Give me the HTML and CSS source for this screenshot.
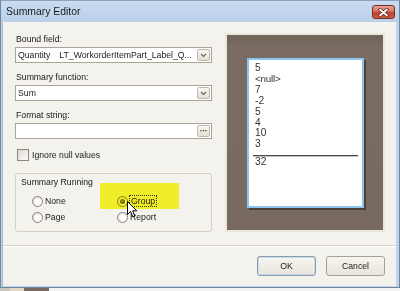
FILE: index.html
```html
<!DOCTYPE html>
<html>
<head>
<meta charset="utf-8">
<link rel="stylesheet" href="styles.css">
</head>
<body>
<div class="window">
  <div class="titlebar">
    <span class="title">Summary Editor</span>
    <div class="close">
      <svg width="11" height="9" viewBox="0 0 11 9"><path d="M2 1.5 L9 7.5 M9 1.5 L2 7.5" stroke="#5a1d15" stroke-width="3.2" stroke-linecap="round"/><path d="M2 1.5 L9 7.5 M9 1.5 L2 7.5" stroke="#fff" stroke-width="1.8" stroke-linecap="round"/></svg>
    </div>
  </div>
  <div class="client">
    <div class="main">
      <div class="left">
        <div class="field">
          <div class="lbl">Bound field:</div>
          <div class="combo"><span class="val">Quantity<span class="gap"></span>LT_WorkorderItemPart_Label_Q...</span><span class="ddbtn"><svg width="7" height="5" viewBox="0 0 7 5"><path d="M1 1 L3.5 3.5 L6 1" fill="none" stroke="#6b6358" stroke-width="1.1"/></svg></span></div>
        </div>
        <div class="field">
          <div class="lbl">Summary function:</div>
          <div class="combo"><span class="val">Sum</span><span class="ddbtn"><svg width="7" height="5" viewBox="0 0 7 5"><path d="M1 1 L3.5 3.5 L6 1" fill="none" stroke="#6b6358" stroke-width="1.1"/></svg></span></div>
        </div>
        <div class="field">
          <div class="lbl">Format string:</div>
          <div class="combo"><span class="val"></span><span class="ddbtn dots">···</span></div>
        </div>
        <div class="check"><span class="box"></span><span>Ignore null values</span></div>
        <div class="group">
          <div class="ghead">Summary Running</div>
          <div class="radios">
            <div class="radio"><span class="circle"></span><span>None</span></div>
            <div class="radio"><span class="circle on"></span><span class="focus">Group</span></div>
            <div class="radio"><span class="circle"></span><span>Page</span></div>
            <div class="radio"><span class="circle"></span><span>Report</span></div>
          </div>
        </div>
      </div>
      <div class="preview">
        <div class="page">
          <div>5</div>
          <div class="null">&lt;null&gt;</div>
          <div>7</div>
          <div>-2</div>
          <div>5</div>
          <div>4</div>
          <div>10</div>
          <div>3</div>
          <div class="rule"></div>
          <div>32</div>
        </div>
      </div>
    </div>
    <div class="sep"></div>
    <div class="buttons">
      <div class="btn default">OK</div>
      <div class="btn">Cancel</div>
    </div>
  </div>
</div>
<div class="below"><span class="b1"></span><span class="b2"></span><span class="b3"></span></div>
<div class="highlight"></div>
<svg class="cursor" width="11" height="17" viewBox="0 0 11 17"><path d="M0.5 0.5 L0.5 13.5 L3.5 10.5 L5.8 15.8 L7.8 15 L5.6 9.8 L9.8 9.8 Z" fill="#fff" stroke="#000" stroke-width="1" stroke-linejoin="round"/></svg>
</body>
</html>
```
FILE: styles.css
```css
* { box-sizing: border-box; margin: 0; padding: 0; }
html, body { width: 400px; height: 291px; overflow: hidden; }
body {
  font-family: "Liberation Sans", Arial, sans-serif;
  font-size: 8.7px;
  color: #1a1a1a;
  background: #ecebe8;
  position: relative;
}
.window {
  width: 400px;
  height: 288px;
  display: flex;
  flex-direction: column;
  background: #bfd4ec;
  border: 1px solid #6f86a0;
  border-top-color: #8aa2bd;
  padding: 0 3px 1px 2px;
}
.titlebar {
  height: 21px;
  display: flex;
  align-items: flex-start;
  background: linear-gradient(#c9dcf0, #bad0e9);
  margin: 0 -3px 0 -2px;
  padding: 0 4px 0 5px;
}
.title {
  font-size: 10.4px;
  color: #1c1c1c;
  line-height: 21px;
}
.close {
  margin-left: auto;
  margin-top: 4px;
  width: 23px;
  height: 14px;
  border: 1px solid #7b2c22;
  border-radius: 3px;
  background: linear-gradient(#e6a399 0%, #d5705f 45%, #bd4530 55%, #c85a45 100%);
  display: flex;
  align-items: center;
  justify-content: center;
}
.client {
  flex: 1;
  background: #f4f2ed;
  display: flex;
  flex-direction: column;
  padding: 11px 11px 0 12px;
  border-left: 1px solid #aab9ca;
  margin-left: -1px;
}
.main {
  display: flex;
  gap: 13px;
  height: 199px;
}
.left {
  width: 197px;
  padding-top: 1px;
  display: flex;
  flex-direction: column;
}
.field { margin-bottom: 9px; }
.lbl {
  line-height: 11px;
  margin-bottom: 2px;
  padding-left: 1px;
}
.combo {
  height: 16px;
  border: 1px solid #aba398;
  background: #fff;
  display: flex;
  align-items: center;
  padding-left: 2px;
}
.val { white-space: nowrap; }
.gap { display: inline-block; width: 9px; }
.ddbtn {
  margin-left: auto;
  margin-right: 1px;
  width: 13px;
  height: 12px;
  border: 1px solid #c2b7a8;
  border-radius: 2px;
  background: linear-gradient(#faf8f4, #e4dfd5);
  display: flex;
  align-items: center;
  justify-content: center;
}
.dots {
  font-size: 9px;
  font-weight: bold;
  color: #4d473f;
  letter-spacing: -0.5px;
  line-height: 10px;
}
.check {
  display: flex;
  align-items: center;
  margin: 1px 0 0 2px;
  height: 12px;
}
.box {
  width: 12px;
  height: 12px;
  border: 1px solid #8d8479;
  background: linear-gradient(135deg, #ddd9d2, #fbfaf8);
  margin-right: 3px;
}
.group {
  margin-top: 12px;
  height: 59px;
  border: 1px solid #d6d0c6;
  border-radius: 3px;
  padding: 3px 0 0 5px;
}
.ghead { line-height: 11px; }
.radios {
  display: grid;
  grid-template-columns: 85px 85px;
  grid-auto-rows: 16px;
  margin: 6px 0 0 11px;
}
.radio {
  display: flex;
  align-items: center;
  height: 14px;
}
.circle {
  width: 11px;
  height: 11px;
  border: 1px solid #8a8177;
  border-radius: 50%;
  background: radial-gradient(circle at 60% 60%, #ffffff 30%, #dcd8d1 100%);
  margin-right: 2px;
  display: flex;
  align-items: center;
  justify-content: center;
}
.circle.on::after {
  content: "";
  width: 5px;
  height: 5px;
  border-radius: 50%;
  background: radial-gradient(circle at 40% 40%, #a09580, #4f4636);
}
.focus {
  border: 1px dotted #333;
  padding: 0 1px;
  line-height: 10px;
  margin-left: -1px;
}
.preview {
  width: 160px;
  height: 199px;
  border: 2px solid #ebe7df;
  background: linear-gradient(#6f635a 0px, #766960 9px, #7a6c62 10px, #786a61 100%);
  padding: 23px 0 0 20px;
}
.page {
  width: 117px;
  height: 150px;
  border: 2px solid #8ec5ef;
  background: #fff;
  box-shadow: 2px 2px 0 #4b413a;
  padding: 3px 0 0 6px;
  font-size: 10.2px;
  line-height: 10.9px;
  color: #333;
}
.page .null { font-size: 9.8px; letter-spacing: -0.2px; }
.rule {
  margin: 5px 0 0 -2px;
  width: 105px;
  height: 2px;
  border-top: 1px solid #4a4a4a;
  border-bottom: 1px solid #c4c0bb;
}
.sep {
  margin: 13px -11px 0 -12px;
  border-top: 1px solid #d8d1c6;
  border-bottom: 1px solid #ffffff;
}
.buttons {
  display: flex;
  justify-content: flex-end;
  gap: 10px;
  margin-top: 9px;
}
.btn {
  width: 59px;
  height: 20px;
  border: 1px solid #aa9f91;
  border-radius: 3px;
  background: linear-gradient(#f7f5f1, #e9e4db);
  display: flex;
  align-items: center;
  justify-content: center;
}
.btn.default {
  border-color: #8f9aa6;
  box-shadow: inset 0 0 0 1px #c3dcf0;
}
.below {
  height: 3px;
  display: flex;
  background: #f3f3f3;
}
.b1 { width: 10px; background: #c9c5c0; }
.b2 { width: 14px; background: #e3d8c8; }
.b3 { width: 25px; background: #786a61; }
.highlight {
  position: absolute;
  left: 100px;
  top: 183px;
  width: 79px;
  height: 26px;
  background: #fbfb2c;
  mix-blend-mode: multiply;
}
.cursor {
  position: absolute;
  left: 127px;
  top: 201px;
}
```
